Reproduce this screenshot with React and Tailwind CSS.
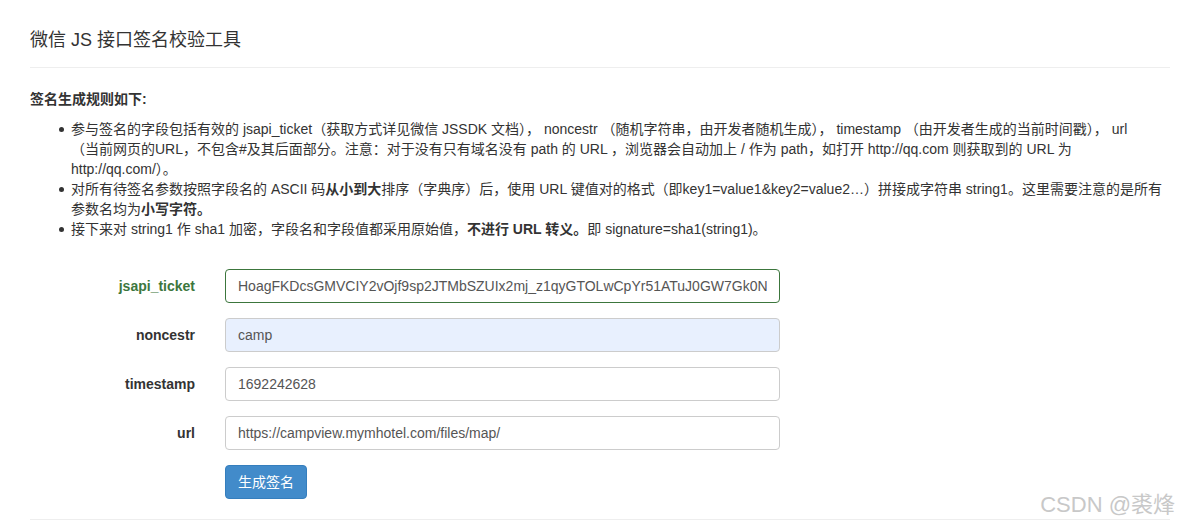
const FONT = { fontFamily: '"Liberation Sans", Arial, "Noto Sans CJK SC", sans-serif' };

const fields = [
  { label: "jsapi_ticket", value: "HoagFKDcsGMVCIY2vOjf9sp2JTMbSZUIx2mj_z1qyGTOLwCpYr51ATuJ0GW7Gk0N", state: "success" },
  { label: "noncestr", value: "camp", state: "autofill" },
  { label: "timestamp", value: "1692242628" },
  { label: "url", value: "https://campview.mymhotel.com/files/map/" },
];

function Bullet({ children }) {
  return (
    <li className="flex">
      <span className="w-[15px] shrink-0">
        <span className="ml-[3px] mt-[8px] block h-[5px] w-[5px] rounded-full bg-[#333]" />
      </span>
      <span>{children}</span>
    </li>
  );
}

export default function App() {
  return (
    <div className="relative h-[525px] w-[1180px] overflow-hidden bg-white text-[#333]" style={FONT}>
      <div className="pl-[30px] pr-[10px]">
        <h1 className="pt-[28px] text-[18px] leading-[24px] text-[#333]">微信 JS 接口签名校验工具</h1>
        <div className="mt-[15px] border-t border-[#eee]" />

        <p className="mt-[21px] text-[14px] font-bold leading-[20px]">签名生成规则如下:</p>
        <ul className="mt-[10px] pl-[26px] text-[14px] leading-[20px]">
          <Bullet>
            参与签名的字段包括有效的 jsapi_ticket（获取方式详见微信 JSSDK 文档）， noncestr （随机字符串，由开发者随机生成）， timestamp （由开发者生成的当前时间戳）， url
            <br />
            （当前网页的URL，不包含#及其后面部分。注意：对于没有只有域名没有 path 的 URL ，浏览器会自动加上 / 作为 path，如打开 http://qq.com 则获取到的 URL 为 http://qq.com/）。
          </Bullet>
          <Bullet>
            对所有待签名参数按照字段名的 ASCII 码<b>从小到大</b>排序（字典序）后，使用 URL 键值对的格式（即key1=value1&key2=value2…）拼接成字符串 string1。这里需要注意的是所有参数名均为<b>小写字符。</b>
          </Bullet>
          <Bullet>
            接下来对 string1 作 sha1 加密，字段名和字段值都采用原始值，<b>不进行 URL 转义。</b>即 signature=sha1(string1)。
          </Bullet>
        </ul>

        <form className="mt-[30px] flex flex-col gap-[15px]" onSubmit={(e) => e.preventDefault()}>
          {fields.map((f) => (
            <div key={f.label} className="flex items-center">
              <label
                className={`w-[195px] pr-[30px] text-right text-[14px] font-bold ${f.state === "success" ? "text-[#3c763d]" : "text-[#333]"}`}
              >
                {f.label}
              </label>
              <input
                readOnly
                value={f.value}
                className={`h-[34px] w-[555px] rounded-[4px] border px-[12px] text-[14px] text-[#555] outline-none ${
                  f.state === "success"
                    ? "border-[#3c763d]"
                    : f.state === "autofill"
                    ? "border-[#ccc] bg-[#e8f0fe]"
                    : "border-[#ccc] bg-white"
                }`}
                style={FONT}
              />
            </div>
          ))}
          <div className="pl-[195px]">
            <button className="h-[34px] rounded-[4px] border border-[#357ebd] bg-[#428bca] px-[12px] text-[14px] text-white" style={FONT}>
              生成签名
            </button>
          </div>
        </form>
        <div className="mt-[20px] border-t border-[#eee]" />
      </div>
      <div className="absolute bottom-[4px] right-[5px] text-[22px] text-[#c8c8c8]" style={FONT}>
        CSDN @裘烽
      </div>
    </div>
  );
}
